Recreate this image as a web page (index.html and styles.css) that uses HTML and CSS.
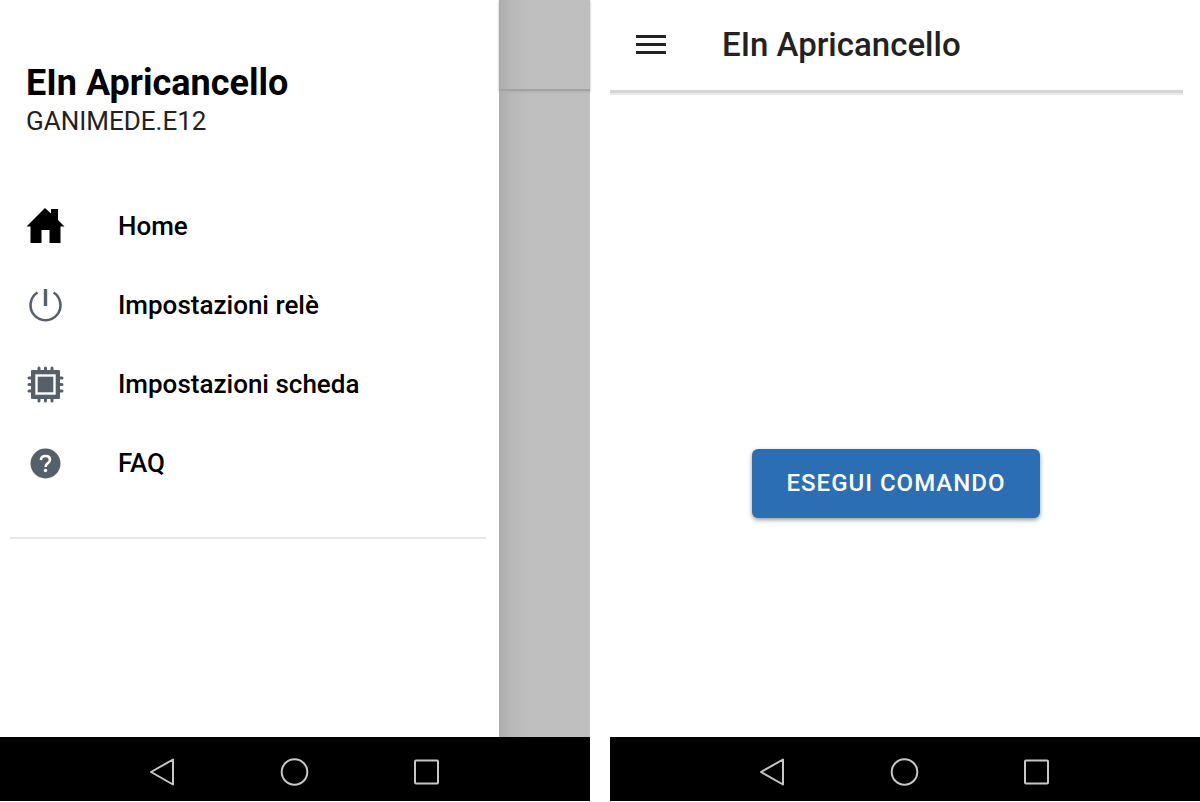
FILE: index.html
```html
<!DOCTYPE html>
<html lang="it">
<head>
<meta charset="utf-8">
<meta name="viewport" content="width=device-width, initial-scale=1">
<title>EIn Apricancello</title>
<link rel="stylesheet" href="styles.css">
</head>
<body>
<div class="screens">
  <section class="phone">
    <div class="phone-body">
      <aside class="drawer">
        <header class="drawer-head">
          <h1 class="drawer-title">EIn Apricancello</h1>
          <p class="drawer-sub">GANIMEDE.E12</p>
        </header>
        <nav class="menu">
          <a class="menu-item" href="#home">
            <svg class="menu-icon" viewBox="0 0 38 38" fill="#000"><path d="M19 1 L25 6.500 V2 H32 V13 L38.500 19.500 H34.500 V36 H23.500 V23 H15.500 V36 H4.500 V19.500 H0.500 Z"/></svg>
            <span>Home</span>
          </a>
          <a class="menu-item" href="#rele">
            <svg class="menu-icon" viewBox="0 0 38 38" fill="none" stroke="#56606b"><path d="M11.500 6.500 A15 15 0 1 0 27.500 6.500" stroke-width="2.600"/><path d="M19.500 3 V20" stroke-width="3.400"/></svg>
            <span>Impostazioni relè</span>
          </a>
          <a class="menu-item" href="#scheda">
            <svg class="menu-icon" viewBox="0 0 38 38"><path d="M13 3 V36 M19.500 3 V36 M26 3 V36 M3 13 H36 M3 19.500 H36 M3 26 H36" fill="none" stroke="#56606b" stroke-width="3" stroke-linecap="round"/><rect x="5" y="5" width="29" height="29" rx="1" fill="#56606b"/><rect x="10.500" y="10.500" width="18" height="18" fill="#56606b" stroke="#fff" stroke-width="2.400"/></svg>
            <span>Impostazioni scheda</span>
          </a>
          <a class="menu-item" href="#faq">
            <svg class="menu-icon" viewBox="0 0 38 38"><circle cx="19.500" cy="19.500" r="15" fill="#56606b"/><path d="M14.800 16 Q15.300 12 19.500 12 Q24 12 24 15.800 Q24 17.800 21.800 19.300 Q19.500 20.800 19.500 23" fill="none" stroke="#fff" stroke-width="2.600"/><circle cx="19.500" cy="26.500" r="1.700" fill="#fff"/></svg>
            <span>FAQ</span>
          </a>
        </nav>
        <hr class="divider">
      </aside>
      <div class="scrim"><div class="scrim-bar"></div></div>
    </div>
    <div class="navbar">
      <button class="nav-btn" type="button" aria-label="Indietro"><svg class="nav-icon" viewBox="0 0 28 28"><path d="M24 1.500 V26.500 L2 14 Z"/></svg></button>
      <button class="nav-btn" type="button" aria-label="Home"><svg class="nav-icon" viewBox="0 0 28 28"><circle cx="13.500" cy="14" r="12.800"/></svg></button>
      <button class="nav-btn" type="button" aria-label="Recenti"><svg class="nav-icon" viewBox="0 0 28 28"><rect x="2" y="2.500" width="23" height="23" rx="1"/></svg></button>
    </div>
  </section>

  <section class="phone">
    <div class="app">
      <header class="appbar">
        <button class="burger" type="button" aria-label="Menu"><svg class="burger-icon" viewBox="0 0 30 30"><path d="M0 6.500 H30 M0 14.500 H30 M0 22.500 H30" stroke="#222" stroke-width="3"/></svg></button>
        <h2 class="app-title">EIn Apricancello</h2>
      </header>
      <main class="content">
        <button class="command" type="button">ESEGUI COMANDO</button>
      </main>
    </div>
    <div class="navbar">
      <button class="nav-btn" type="button" aria-label="Indietro"><svg class="nav-icon" viewBox="0 0 28 28"><path d="M24 1.500 V26.500 L2 14 Z"/></svg></button>
      <button class="nav-btn" type="button" aria-label="Home"><svg class="nav-icon" viewBox="0 0 28 28"><circle cx="13.500" cy="14" r="12.800"/></svg></button>
      <button class="nav-btn" type="button" aria-label="Recenti"><svg class="nav-icon" viewBox="0 0 28 28"><rect x="2" y="2.500" width="23" height="23" rx="1"/></svg></button>
    </div>
  </section>
</div>
</body>
</html>
```
FILE: styles.css
```css
* { box-sizing: border-box; }

body {
  margin: 0;
  background: #fff;
  color: #000;
  font-family: Roboto, "Liberation Sans", sans-serif;
}

h1, h2, p { margin: 0; }

button {
  border: 0;
  padding: 0;
  background: none;
  font-family: inherit;
  cursor: pointer;
}

svg { display: block; overflow: visible; }

.screens {
  display: grid;
  grid-template-columns: 1fr 1fr;
  gap: 20px;
  min-height: 100vh;
  padding-bottom: 1px;
}

.phone {
  display: flex;
  flex-direction: column;
}

.phone-body {
  flex: 1;
  display: flex;
}

.drawer {
  flex: 1;
  padding: 62px 13px 0 10px;
}

.drawer-head { padding: 0 16px; }

.drawer-title {
  font-size: 36px;
  line-height: 42px;
  font-weight: 700;
}

.drawer-sub {
  color: #222;
  font-size: 26px;
  line-height: 34px;
}

.menu {
  display: flex;
  flex-direction: column;
  padding: 48px 16px 35px;
}

.menu-item {
  display: flex;
  align-items: center;
  gap: 54px;
  height: 79px;
  color: #000;
  font-size: 26px;
  font-weight: 500;
  text-decoration: none;
}

.menu-icon {
  width: 38px;
  height: 38px;
}

.divider {
  margin: 0;
  border: 0;
  border-top: 2px solid #e6e6e6;
}

.scrim {
  width: 91px;
  background: linear-gradient(90deg, #acacac, #b8b8b8 12px, #bfbfbf 30px);
}

.scrim-bar {
  height: 91px;
  border-bottom: 2px solid #a2a2a2;
  box-shadow: 0 1px 2px #adadad;
}

.navbar {
  display: flex;
  justify-content: center;
  align-items: center;
  gap: 104px;
  height: 64px;
  padding-top: 5px;
  background: #000;
}

.nav-icon {
  width: 28px;
  height: 28px;
  fill: none;
  stroke: #c9c7c4;
  stroke-width: 2;
  stroke-linejoin: round;
}

.app {
  flex: 1;
  display: flex;
  flex-direction: column;
}

.appbar {
  display: flex;
  align-items: center;
  gap: 56px;
  height: 90px;
  margin-right: 17px;
  padding-left: 26px;
  box-shadow: 0 3px 0 #d5d5d5, 0 5px 0 #ebebeb;
}

.burger-icon {
  width: 30px;
  height: 30px;
}

.app-title {
  color: #222;
  font-size: 33px;
  line-height: 40px;
  font-weight: 500;
}

.content {
  flex: 1;
  display: flex;
  justify-content: center;
  align-items: center;
  padding: 140px 18px 0 0;
}

.command {
  padding: 20px 34px;
  border-radius: 6px;
  background: #2c6eb3;
  box-shadow: 0 2px 4px rgba(0, 0, 0, 0.4);
  color: #fff;
  font-size: 24px;
  line-height: 29px;
  font-weight: 500;
  letter-spacing: 1px;
}
```
